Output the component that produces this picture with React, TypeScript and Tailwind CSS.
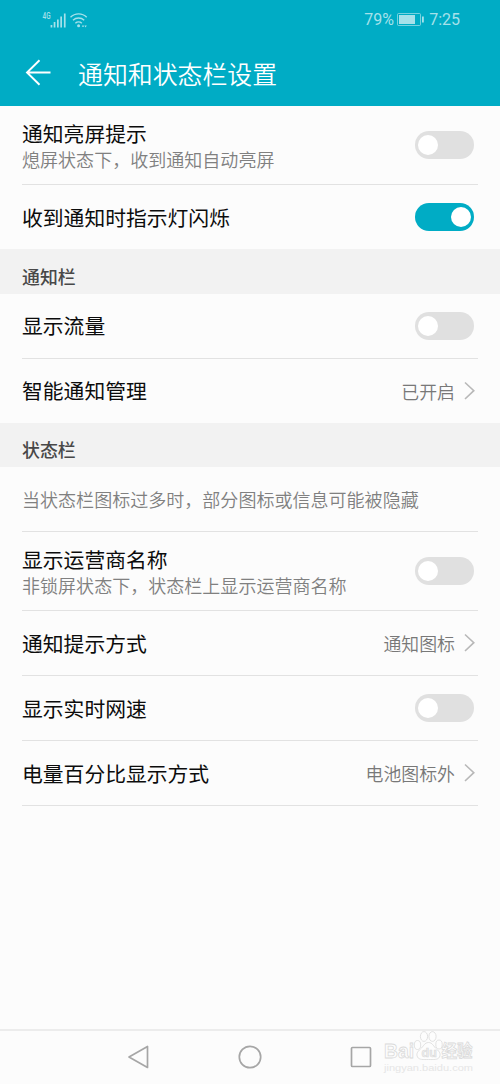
import React, { useState } from "react";

type Item = {
  title?: string;
  note?: string;
  value?: string;
  toggle?: boolean;
  last?: boolean;
};

type Section = {
  heading?: string;
  items: Item[];
};

const sections: Section[] = [
  {
    items: [
      {
        title: "通知亮屏提示",
        note: "熄屏状态下，收到通知自动亮屏",
        toggle: false,
      },
      { title: "收到通知时指示灯闪烁", toggle: true, last: true },
    ],
  },
  {
    heading: "通知栏",
    items: [
      { title: "显示流量", toggle: false },
      { title: "智能通知管理", value: "已开启", last: true },
    ],
  },
  {
    heading: "状态栏",
    items: [
      { note: "当状态栏图标过多时，部分图标或信息可能被隐藏" },
      {
        title: "显示运营商名称",
        note: "非锁屏状态下，状态栏上显示运营商名称",
        toggle: false,
      },
      { title: "通知提示方式", value: "通知图标" },
      { title: "显示实时网速", toggle: false },
      { title: "电量百分比显示方式", value: "电池图标外" },
    ],
  },
];

const StatusBar = () => (
  <div className="flex h-10 items-center justify-between pl-[42px] pr-10 text-[#a6e1ea]">
    <svg width="46" height="18" viewBox="0 0 46 18" fill="currentColor">
      <text
        x="0.5"
        y="8"
        fontSize="8.5"
        fontWeight="500"
        textLength="8"
        lengthAdjust="spacingAndGlyphs"
        fontFamily="Roboto, sans-serif"
      >
        4G
      </text>
      <rect x="8.6" y="14" width="1.7" height="2.5" />
      <rect x="11.7" y="11" width="1.7" height="5.5" />
      <rect x="15" y="8.5" width="1.7" height="8" />
      <rect x="18.3" y="5.5" width="1.7" height="11" />
      <rect x="21.9" y="2.5" width="1.7" height="14" />
      <g fill="none" stroke="currentColor" strokeWidth="1.4">
        <path d="M28.5 6.2a11.5 11.5 0 0 1 16.2 0" />
        <path d="M31 9.3a8 8 0 0 1 11.2 0" />
        <path d="M33.4 12.2a4.6 4.6 0 0 1 6.4 0" />
      </g>
      <circle cx="36.6" cy="14.8" r="1.5" />
      <path d="M39.8 15.8l1.2-2 1.2 2zM42.4 14.5l1.2 2 1.2-2z" />
    </svg>
    <div className="flex items-center font-[Roboto,sans-serif] text-[16px] leading-none">
      <span className="w-[33px] whitespace-nowrap text-[16px]">79%</span>
      <svg width="28" height="14" viewBox="0 0 28 14" className="mr-[4px]">
        <rect
          x="0.5"
          y="0.5"
          width="23"
          height="12"
          rx="1"
          fill="none"
          stroke="currentColor"
          strokeOpacity="0.7"
        />
        <rect x="2" y="2" width="16" height="9" fill="currentColor" />
        <rect x="25" y="3.5" width="1.8" height="6" fill="currentColor" />
      </svg>
      <span>7:25</span>
    </div>
  </div>
);

const Header = () => (
  <header className="h-[106px] bg-[#00acc5]">
    <StatusBar />
    <div className="flex h-[66px] items-center pl-[25px]">
      <svg
        width="28"
        height="28"
        viewBox="0 0 28 28"
        fill="none"
        stroke="white"
        strokeWidth="1.9"
        className="mr-[25px]"
      >
        <path d="M25.5 13.5H2M14.5 1.2L2 13.5l12.5 12.3" />
      </svg>
      <h1 className="text-[24.9px] leading-[36px] font-[350] text-white">
        通知和状态栏设置
      </h1>
    </div>
  </header>
);

const Toggle = ({
  on,
  onClick,
}: {
  on: boolean;
  onClick: () => void;
}) => (
  <button
    onClick={onClick}
    className={`mr-1 flex h-7 w-[59px] shrink-0 items-center rounded-full px-[3px] ${
      on ? "justify-end bg-[#00acc5]" : "justify-start bg-[#e0e0e0]"
    }`}
  >
    <span className="size-5 rounded-full bg-white" />
  </button>
);

const Row = ({ item }: { item: Item }) => {
  const [on, setOn] = useState(item.toggle ?? false);

  const height =
    item.title && item.note ? "h-[79px]" : item.last ? "h-16" : "h-[65px]";

  return (
    <div
      className={`mx-[22px] flex items-center justify-between ${height} ${
        item.last ? "" : "border-b border-[#e2e2e2]"
      }`}
    >
      <div>
        {item.title && (
          <p
            className={`text-[20.8px] text-[#0c0c0c] ${
              item.note ? "pt-px leading-[26px]" : "leading-[27px]"
            }`}
          >
            {item.title}
          </p>
        )}
        {item.note && (
          <p className="text-[18.05px] leading-[26px] font-[350] text-[#808080]">
            {item.note}
          </p>
        )}
      </div>
      {item.toggle !== undefined && (
        <Toggle on={on} onClick={() => setOn(!on)} />
      )}
      {item.value && (
        <div className="mr-[2px] flex items-center gap-2">
          <span className="text-[17.9px] leading-[26px] font-[350] text-[#787878]">
            {item.value}
          </span>
          <svg
            width="13"
            height="20"
            viewBox="0 0 13 20"
            fill="none"
            stroke="#b8b8b8"
            strokeWidth="1.6"
          >
            <path d="M2 1.5l8.8 8.2L2 18" />
          </svg>
        </div>
      )}
    </div>
  );
};

const Watermark = () => (
  <div className="pointer-events-none absolute right-[24px] top-0 h-[42px] w-[93px]">
    <svg
      width="93"
      height="42"
      viewBox="0 0 93 42"
      fill="#fdfdfd"
      stroke="#dadada"
      strokeWidth="0.8"
      fontFamily="'Liberation Sans', 'Noto Sans CJK SC', sans-serif"
      fontWeight="700"
    >
      <text x="1" y="27" fontSize="20.5" textLength="30" lengthAdjust="spacingAndGlyphs">
        Bai
      </text>
      <ellipse cx="34.5" cy="14" rx="3.2" ry="4.5" />
      <ellipse cx="41" cy="5.5" rx="3.6" ry="4.9" />
      <ellipse cx="49.5" cy="5.5" rx="3.6" ry="4.9" />
      <ellipse cx="56" cy="13.5" rx="3.2" ry="4.5" />
      <path d="M45.5 11.5c4 0 5 4 8 6.5c3 2.5 4.5 5 3 8c-1.5 3-6 2.500-11 2.500s-9.500 .5-11-2.500c-1.500-3 0-5.500 3-8c3-2.500 4-6.500 8-6.500z" />
      <text x="38.5" y="26" fontSize="12.5" strokeWidth="0.6" fill="#eeeeee">
        du
      </text>
      <text x="58.5" y="26" fontSize="16.5" textLength="31" lengthAdjust="spacingAndGlyphs">
        经验
      </text>
      <text
        x="1"
        y="39.5"
        fontSize="9"
        fontWeight="400"
        strokeWidth="0"
        fill="#e6e6e6"
        textLength="89"
        lengthAdjust="spacingAndGlyphs"
      >
        jingyan.baidu.com
      </text>
    </svg>
  </div>
);

const NavBar = () => (
  <nav className="relative flex h-[55px] items-center justify-center gap-[84px] border-t-2 border-[#ececec] pb-[2px]">
    <svg
      width="27"
      height="26"
      viewBox="0 0 27 26"
      fill="none"
      stroke="#a6a6a6"
      strokeWidth="1.7"
      strokeLinejoin="round"
    >
      <path d="M21.5 2.5v21L3 13z" />
    </svg>
    <svg width="27" height="26" viewBox="0 0 27 26" fill="none">
      <circle cx="13" cy="13" r="10.7" stroke="#a6a6a6" strokeWidth="1.7" />
    </svg>
    <svg width="27" height="26" viewBox="0 0 27 26" fill="none">
      <rect
        x="3.5"
        y="3.5"
        width="19"
        height="19"
        rx="1"
        stroke="#a6a6a6"
        strokeWidth="1.7"
      />
    </svg>
    <Watermark />
  </nav>
);

const App = () => {
  return (
    <div className="flex h-[1084px] w-[500px] flex-col overflow-hidden bg-[#fcfcfc] font-['Noto_Sans_CJK_SC',sans-serif]">
      <Header />
      <main className="flex-1">
        {sections.map((section, index) => (
          <section key={index}>
            {section.heading && (
              <h2 className="flex h-[44.5px] items-center bg-[#f2f2f2] px-[22px] pt-[10px] text-[17.9px] font-medium text-[#484848]">
                {section.heading}
              </h2>
            )}
            {section.items.map((item, i) => (
              <Row key={i} item={item} />
            ))}
          </section>
        ))}
      </main>
      <NavBar />
    </div>
  );
};

export default App;
